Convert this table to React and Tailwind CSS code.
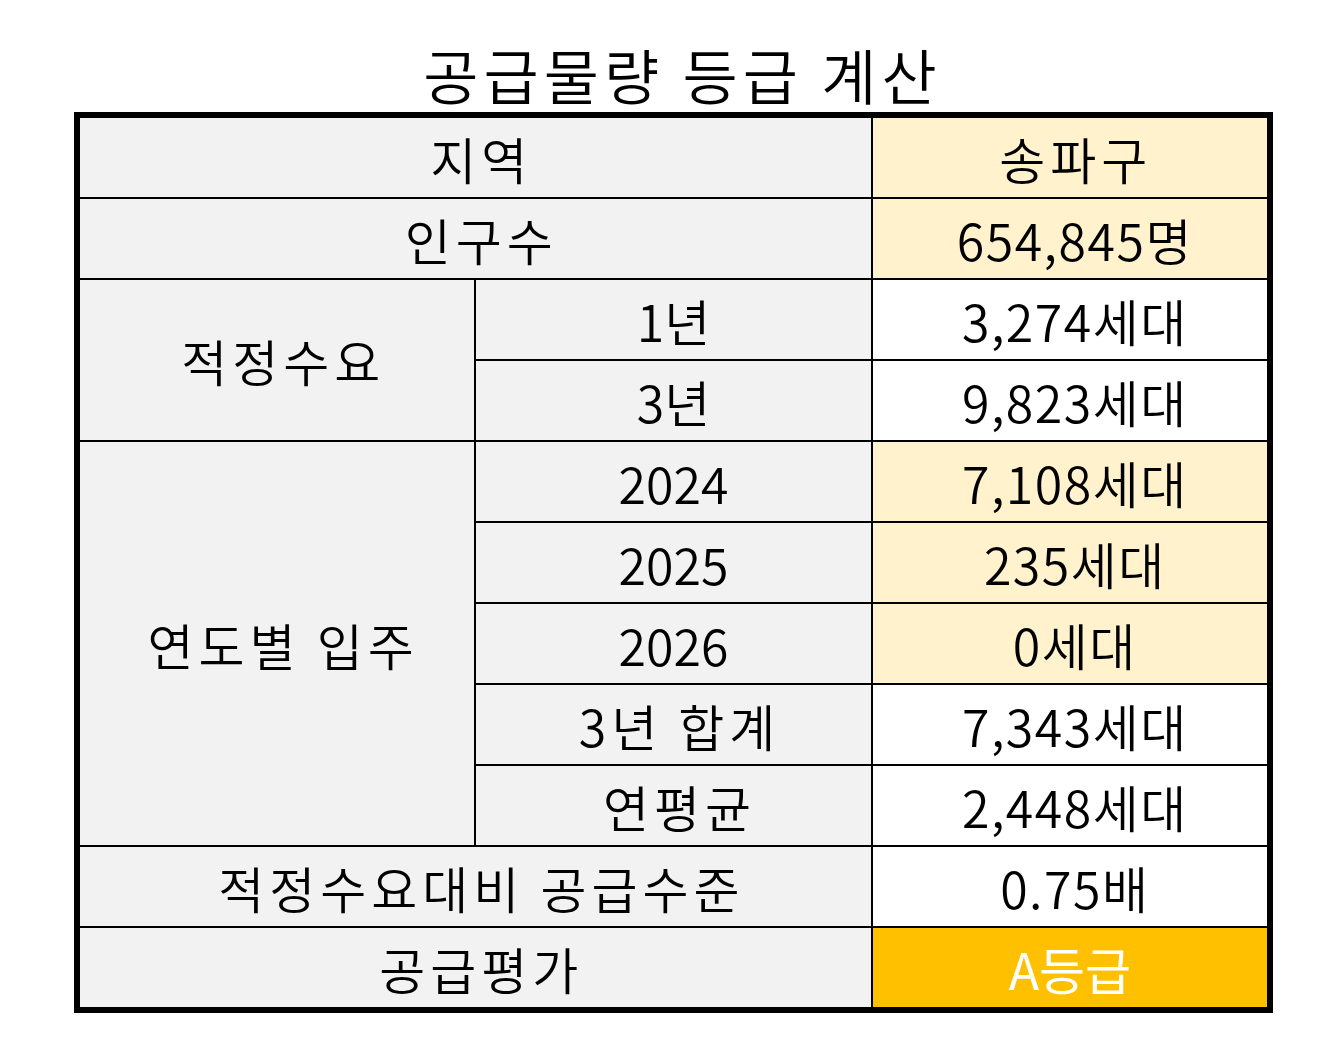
import React from 'react';

// 셀 배경색
const BG = {
    gray: 'bg-[#f2f2f2] text-black',
    cream: 'bg-[#fff2cc] text-black',
    white: 'bg-white text-black',
    gold: 'bg-[#ffc000] text-white',
};

// 한글 라벨은 자간이 넓고, 숫자 값은 약간만
const Cell = ({ children, tone = 'gray', wide = false, value = false, className = '' }) => (
    <div
        className={`flex items-center justify-center text-[50px] leading-none font-[350] ${
            wide ? 'tracking-[5px] pl-[12px]' : ''
        } ${value ? 'tracking-[1.5px] pl-[10px]' : ''} ${BG[tone]} ${className}`}
    >
        {children}
    </div>
);

const App = () => {
    return (
        <div className="min-h-screen bg-white pt-[36px]" style={{ fontFamily: '"Noto Sans CJK KR", "Noto Sans", sans-serif' }}>
            <h1 className="pl-[22px] text-center text-[60px] leading-[76px] tracking-[5px] font-[350] text-black">
                공급물량 등급 계산
            </h1>

            <div className="ml-[74px] w-[1199px] border-[6px] border-black bg-black grid grid-cols-3 grid-rows-[repeat(11,79px)] gap-[2px]">
                <Cell wide className="col-span-2">지역</Cell>
                <Cell wide tone="cream">송파구</Cell>

                <Cell wide className="col-span-2">인구수</Cell>
                <Cell value tone="cream">654,845명</Cell>

                <Cell wide className="row-span-2">적정수요</Cell>
                <Cell>1년</Cell>
                <Cell value tone="white">3,274세대</Cell>
                <Cell>3년</Cell>
                <Cell value tone="white">9,823세대</Cell>

                <Cell wide className="row-span-5">연도별 입주</Cell>
                <Cell>2024</Cell>
                <Cell value tone="cream">7,108세대</Cell>
                <Cell>2025</Cell>
                <Cell value tone="cream">235세대</Cell>
                <Cell>2026</Cell>
                <Cell value tone="cream">0세대</Cell>
                <Cell wide>3년 합계</Cell>
                <Cell value tone="white">7,343세대</Cell>
                <Cell wide>연평균</Cell>
                <Cell value tone="white">2,448세대</Cell>

                <Cell wide className="col-span-2">적정수요대비 공급수준</Cell>
                <Cell value tone="white">0.75배</Cell>

                <Cell wide className="col-span-2">공급평가</Cell>
                <Cell tone="gold" className="!font-normal">A등급</Cell>
            </div>
        </div>
    );
};

export default App;
